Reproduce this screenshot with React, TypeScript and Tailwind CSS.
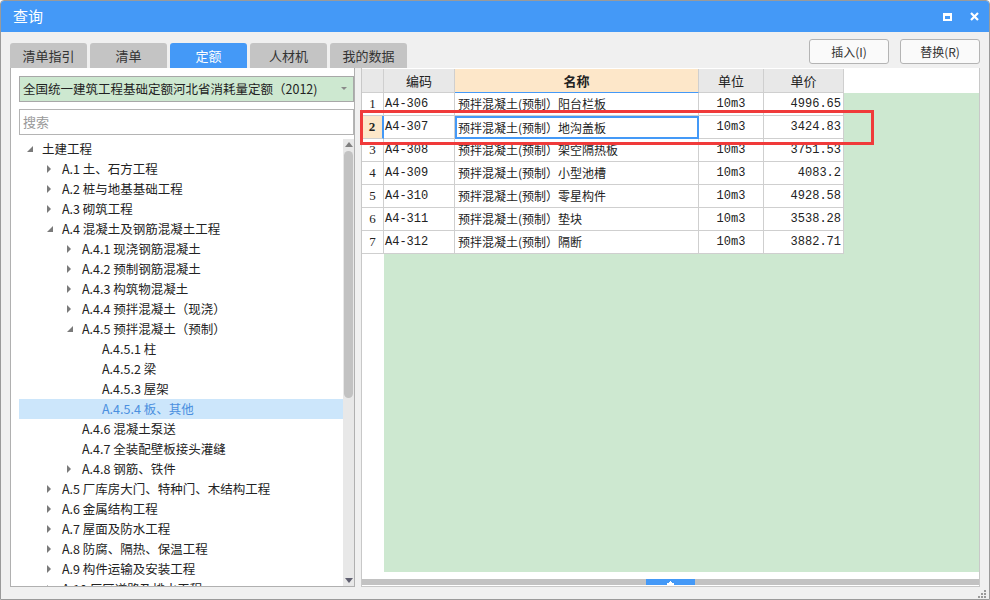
import React from 'react';

const font = { fontFamily: '"Noto Sans CJK SC", "Noto Sans", sans-serif' };

type Node = { label: string; level: number; arrow?: 'open' | 'closed'; selected?: boolean };

const tree: Node[] = [
  { label: '土建工程', level: 0, arrow: 'open' },
  { label: 'A.1 土、石方工程', level: 1, arrow: 'closed' },
  { label: 'A.2 桩与地基基础工程', level: 1, arrow: 'closed' },
  { label: 'A.3 砌筑工程', level: 1, arrow: 'closed' },
  { label: 'A.4 混凝土及钢筋混凝土工程', level: 1, arrow: 'open' },
  { label: 'A.4.1 现浇钢筋混凝土', level: 2, arrow: 'closed' },
  { label: 'A.4.2 预制钢筋混凝土', level: 2, arrow: 'closed' },
  { label: 'A.4.3 构筑物混凝土', level: 2, arrow: 'closed' },
  { label: 'A.4.4 预拌混凝土（现浇）', level: 2, arrow: 'closed' },
  { label: 'A.4.5 预拌混凝土（预制）', level: 2, arrow: 'open' },
  { label: 'A.4.5.1 柱', level: 3 },
  { label: 'A.4.5.2 梁', level: 3 },
  { label: 'A.4.5.3 屋架', level: 3 },
  { label: 'A.4.5.4 板、其他', level: 3, selected: true },
  { label: 'A.4.6 混凝土泵送', level: 2 },
  { label: 'A.4.7 全装配壁板接头灌缝', level: 2 },
  { label: 'A.4.8 钢筋、铁件', level: 2, arrow: 'closed' },
  { label: 'A.5 厂库房大门、特种门、木结构工程', level: 1, arrow: 'closed' },
  { label: 'A.6 金属结构工程', level: 1, arrow: 'closed' },
  { label: 'A.7 屋面及防水工程', level: 1, arrow: 'closed' },
  { label: 'A.8 防腐、隔热、保温工程', level: 1, arrow: 'closed' },
  { label: 'A.9 构件运输及安装工程', level: 1, arrow: 'closed' },
  { label: 'A.10 厂区道路及排水工程', level: 1, arrow: 'closed' },
];

const rows = [
  { code: 'A4-306', name: '预拌混凝土(预制）阳台栏板', unit: '10m3', price: '4996.65' },
  { code: 'A4-307', name: '预拌混凝土(预制）地沟盖板', unit: '10m3', price: '3424.83' },
  { code: 'A4-308', name: '预拌混凝土(预制）架空隔热板', unit: '10m3', price: '3751.53' },
  { code: 'A4-309', name: '预拌混凝土(预制）小型池槽', unit: '10m3', price: '4083.2' },
  { code: 'A4-310', name: '预拌混凝土(预制）零星构件', unit: '10m3', price: '4928.58' },
  { code: 'A4-311', name: '预拌混凝土(预制）垫块', unit: '10m3', price: '3538.28' },
  { code: 'A4-312', name: '预拌混凝土(预制）隔断', unit: '10m3', price: '3882.71' },
];

const tabs = ['清单指引', '清单', '定额', '人材机', '我的数据'];

const Arrow = ({ kind }: { kind?: 'open' | 'closed' }) => {
  if (kind === 'closed')
    return (
      <svg width="5" height="8" viewBox="0 0 5 8"><path d="M0 0 L4 4 L0 8 Z" fill="#7a7a7a" /></svg>
    );
  if (kind === 'open')
    return (
      <svg width="6" height="6" viewBox="0 0 6 6"><path d="M6 0 L6 6 L0 6 Z" fill="#7a7a7a" /></svg>
    );
  return null;
};

const mono = { fontFamily: '"Liberation Mono", "Noto Sans CJK SC", monospace' };

export default function App() {
  return (
    <div style={font} className="w-[990px] h-[600px] bg-[#f0f0f0] border border-[#9a9a9a] rounded-t-[4px] flex flex-col overflow-hidden text-[12px] text-[#222]">
      {/* title bar */}
      <div className="h-[31px] shrink-0 bg-[#4499f7] flex items-center pl-[12px] pr-[9px] text-white">
        <span className="text-[15px]">查询</span>
        <div className="flex-1" />
        <div className="w-[9px] h-[8px] border-white border-[2px] border-t-[3px] mr-[18px]" />
        <svg width="9" height="9" viewBox="0 0 9 9" className="mr-[1px]">
          <path d="M1 1 L8 8 M8 1 L1 8" stroke="white" strokeWidth="2.2" />
        </svg>
      </div>

      {/* tabs + buttons */}
      <div className="h-[36px] shrink-0 flex pl-[9px] pr-[9px]">
        <div className="flex items-end gap-[3px]">
          {tabs.map(t => (
            <div
              key={t}
              className={`w-[77px] h-[25px] rounded-t-[3px] flex items-center justify-center text-[13px] ${t === '定额' ? 'bg-[#4499f7] text-white' : 'bg-[#c4c4c4] text-[#333]'}`}
            >
              {t}
            </div>
          ))}
        </div>
        <div className="flex-1" />
        <div className="flex gap-[11px] pt-[7px]">
          <button className="w-[80px] h-[25px] border border-[#b4b4b4] rounded-[3px] bg-[#fafafa] text-[#333] text-[12px]">插入(I)</button>
          <button className="w-[80px] h-[25px] border border-[#b4b4b4] rounded-[3px] bg-[#fafafa] text-[#333] text-[12px]">替换(R)</button>
        </div>
      </div>

      {/* content */}
      <div className="flex-1 flex pl-[9px] pr-[9px] gap-[6px] min-h-0">
        {/* left panel */}
        <div className="w-[345px] h-[519px] bg-white border border-[#b0b0b0] border-t-0 flex flex-col">
          <div className="pl-[8px] pt-[8px] pr-0">
            <div className="h-[26px] bg-[#cde8d0] border border-[#a8a8a8] flex items-center pl-[3px] pr-[6px]">
              <span className="flex-1 text-[12.5px]">全国统一建筑工程基础定额河北省消耗量定额（2012)</span>
              <svg width="6" height="4" viewBox="0 0 6 4"><path d="M0 0 L6 0 L3 3 Z" fill="#8a8a8a" /></svg>
            </div>
            <div className="h-[26px] mt-[7px] border border-[#b4b4b4] flex items-center pl-[3px] text-[#999] text-[13px]">搜索</div>
          </div>
          <div className="flex-1 flex mt-[4px] min-h-0">
            <div className="flex-1 overflow-hidden pl-[8px] text-[12.5px]">
              {tree.map((n, i) => (
                <div
                  key={i}
                  className={`h-[20px] flex items-center whitespace-nowrap ${n.selected ? 'bg-[#cce6fb] text-[#4a8fdf]' : ''}`}
                  style={{ paddingLeft: n.level * 20 }}
                >
                  <div className="w-[23px] flex items-center pl-[8px] shrink-0">
                    <Arrow kind={n.arrow} />
                  </div>
                  <span>{n.label}</span>
                </div>
              ))}
            </div>
            <div className="w-[11px] bg-[#e8e8e8] flex flex-col items-center shrink-0">
              <svg width="8" height="5" viewBox="0 0 8 5" className="mt-[3px]"><path d="M0 5 L4 0 L8 5 Z" fill="#808080" /></svg>
              <div className="w-[9px] h-[247px] mt-[4px] bg-[#c2c2c2] rounded-[5px]" />
              <div className="flex-1" />
              <svg width="8" height="5" viewBox="0 0 8 5" className="mb-[3px]"><path d="M0 0 L8 0 L4 5 Z" fill="#606070" /></svg>
            </div>
          </div>
        </div>

        {/* right panel */}
        <div className="flex-1 h-[519px] bg-white border border-[#c8c8c8] border-t-0 flex flex-col relative">
          <div className="flex-1 flex min-h-0 pt-[1px]">
            {/* row numbers */}
            <div className="w-[22px] flex flex-col shrink-0" style={{ fontFamily: '"Liberation Serif", serif' }}>
              <div className="h-[24px] bg-[#e8e8e8] border-r border-b border-[#cfcfcf]" />
              {rows.map((r, i) => (
                <div
                  key={i}
                  className={`h-[23px] flex items-center justify-center border-b border-[#cfcfcf] text-[13px] ${i === 1 ? 'bg-[#fde7c9] border-r-2 border-r-[#4499f7] font-bold' : 'border-r'}`}
                >
                  {i + 1}
                </div>
              ))}
            </div>
            <div className="flex-1 flex flex-col min-w-0">
              <div className="h-[24px] flex shrink-0 text-[13px]">
                <div className="w-[71px] bg-[#e8e8e8] border-r border-b border-[#cfcfcf] flex items-center justify-center">编码</div>
                <div className="w-[244px] bg-[#fde7c9] border-r border-[#cfcfcf] border-b border-b-[#4499f7] flex items-center justify-center font-bold">名称</div>
                <div className="w-[65px] bg-[#e8e8e8] border-r border-b border-[#cfcfcf] flex items-center justify-center">单位</div>
                <div className="w-[80px] bg-[#e8e8e8] border-r border-b border-[#cfcfcf] flex items-center justify-center">单价</div>
              </div>
              <div className="flex-1 bg-[#cde8d0] mb-[7px]">
                {rows.map((r, i) => (
                  <div key={i} className="h-[23px] flex w-[460px] bg-white text-[12px]">
                    <div style={mono} className="w-[71px] border-r border-b border-[#cfcfcf] flex items-center pl-[1px]">{r.code}</div>
                    <div
                      className={`w-[244px] flex items-center ${i === 1 ? 'border-2 border-[#4499f7] pl-[1px]' : 'border-r border-b border-[#cfcfcf] pl-[3px]'}`}
                      style={{ fontFamily: '"Noto Sans CJK SC", sans-serif' }}
                    >
                      {r.name}
                    </div>
                    <div style={mono} className="w-[65px] border-r border-b border-[#cfcfcf] flex items-center justify-center">{r.unit}</div>
                    <div style={mono} className="w-[80px] border-r border-b border-[#cfcfcf] flex items-center justify-end pr-[2px]">{r.price}</div>
                  </div>
                ))}
              </div>
            </div>
          </div>
          {/* horizontal scrollbar */}
          <div className="h-[6px] bg-[#c2c2c2] mb-[1px] flex">
            <div className="w-[284px]" />
            <div className="w-[49px] bg-[#4499f7] flex items-end justify-center">
              <svg width="7" height="4" viewBox="0 0 7 4"><path d="M3 0 L4 0 L4 1 L5 1 L5 2 L7 2 L7 4 L0 4 L0 2 L2 2 L2 1 L3 1 Z" fill="white" /></svg>
            </div>
          </div>

          {/* red highlight */}
          <div className="absolute left-[-2px] top-[42px] w-[514px] h-[35px] border-[3px] border-[#f03a3a] pointer-events-none" />
        </div>
      </div>

      {/* bottom */}
      <div className="h-[12px] shrink-0 flex justify-end items-end pr-[3px] pb-[1px]">
        <svg width="8" height="8" viewBox="0 0 8 8">
          <rect x="6" y="0" width="2" height="2" fill="#9a9a9a" />
          <rect x="3" y="3" width="2" height="2" fill="#9a9a9a" />
          <rect x="6" y="3" width="2" height="2" fill="#9a9a9a" />
          <rect x="0" y="6" width="2" height="2" fill="#9a9a9a" />
          <rect x="3" y="6" width="2" height="2" fill="#9a9a9a" />
          <rect x="6" y="6" width="2" height="2" fill="#9a9a9a" />
        </svg>
      </div>
    </div>
  );
}
